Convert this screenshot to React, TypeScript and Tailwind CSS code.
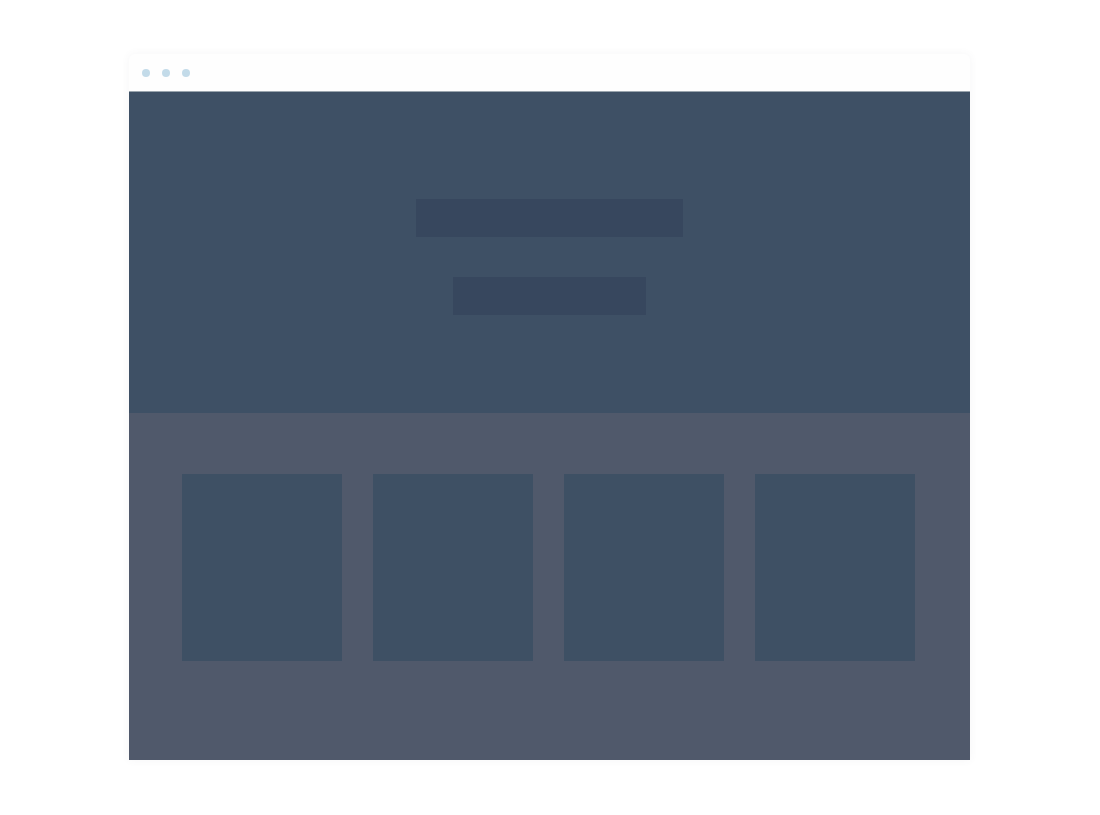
import React from "react";

const cards = [1, 2, 3, 4];

const App = () => {
  return (
    <main className="min-h-screen bg-white pt-[54px] pr-[130px] pb-[55px] pl-[129px]">
      <div className="rounded-t-md bg-[#fefefe] shadow-[0_0_8px_rgba(80,89,107,0.06)]">
        {/* Window bar */}
        <header className="flex h-[38px] items-center gap-3 rounded-t-md border-b border-[#9aa5ae] px-[13px]">
          <span className="size-2 rounded-full bg-[#c3dbe9]" />
          <span className="size-2 rounded-full bg-[#c3dbe9]" />
          <span className="size-2 rounded-full bg-[#c3dbe9]" />
        </header>

        {/* Hero */}
        <section className="flex flex-col items-center gap-10 bg-[#3e5065] pt-[107px] pb-[98px]">
          <div className="h-[38px] w-[267px] max-w-full bg-[#37475e]" />
          <div className="h-[38px] w-[193px] max-w-full bg-[#37475e]" />
        </section>

        {/* Cards */}
        <section className="grid grid-cols-4 gap-[31px] bg-[#50596b] pt-[61px] pr-[55px] pb-[99px] pl-[53px]">
          {cards.map((card) => (
            <div key={card} className="h-[187px] bg-[#3e5064]" />
          ))}
        </section>
      </div>
    </main>
  );
};

export default App;
